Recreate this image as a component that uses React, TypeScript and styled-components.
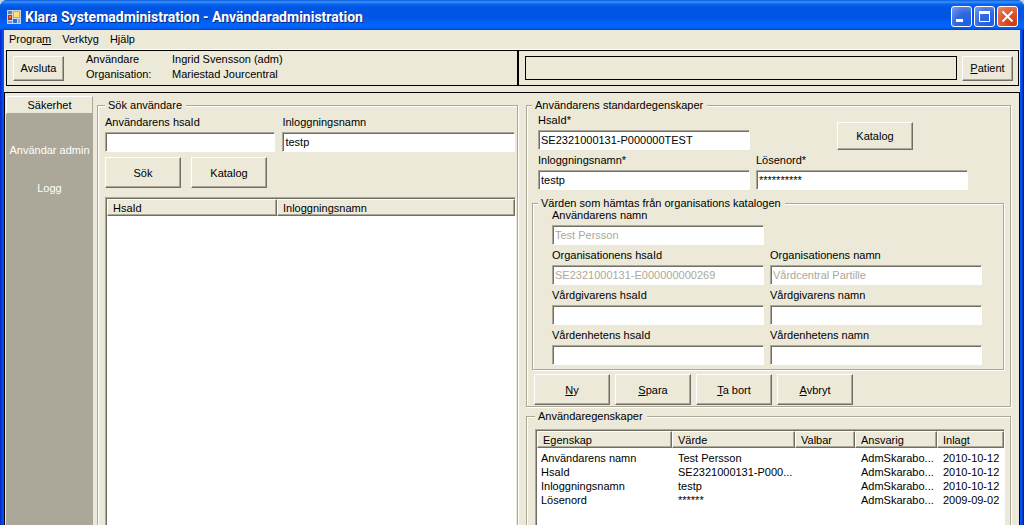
import React from "react";
import styled, { createGlobalStyle } from "styled-components";

const face = "#ece9d8";
const shadow = "#aca899";
const dark = "#716f64";

const Global = createGlobalStyle`
  *, *::before, *::after { box-sizing: border-box; }
  body {
    margin: 0;
    background: #c8d4ea;
    color: #000;
    font: 11px/14px "Liberation Sans", Arial, sans-serif;
  }
  button, input { font: inherit; color: inherit; }
`;

const Window = styled.div`
  display: flex;
  flex-direction: column;
  height: 100vh;
  overflow: hidden;
  border-radius: 7px 7px 0 0;
  background: linear-gradient(to right, #0a22c8 0, #0046e0 2px, #0a5af0 4px, #0a5af0 calc(100% - 4px), #0046e0 calc(100% - 2px), #0014a0 100%);
`;

const TitleBar = styled.header`
  display: flex;
  align-items: center;
  gap: 4px;
  flex: none;
  height: 30px;
  padding: 3px 6px 0 7px;
  background: linear-gradient(#0a5ade 0, #3c92fb 2px, #0a66ee 4px, #0054e3 8px, #0055e6 18px, #0066ff 25px, #0060f8 28px, #0043c4 30px);
`;

const Title = styled.h1`
  flex: 1;
  margin: 0;
  padding-top: 1px;
  color: #fff;
  font: bold 14px/20px Roboto, sans-serif;
  text-shadow: 1px 1px 0 #0a2a86;
  white-space: nowrap;
`;

const WindowButtons = styled.div`
  display: flex;
  gap: 2px;
`;

const WindowButton = styled.button<{ $close?: boolean }>`
  display: flex;
  width: 21px;
  height: 21px;
  padding: 0;
  border: 1px solid #fff;
  border-radius: 3px;
  background: ${(p) =>
    p.$close
      ? "radial-gradient(circle at 80% 90%, #d0380c, #e0552e 50%, #e88a6c)"
      : "radial-gradient(circle at 80% 90%, #1a5ee8, #3468dc 50%, #7b9cf0)"};
`;

const Body = styled.div`
  display: flex;
  flex-direction: column;
  flex: 1;
  min-height: 0;
  margin: 0 4px;
  background: ${face};
`;

const MenuBar = styled.nav`
  display: flex;
  gap: 11px;
  flex: none;
  height: 20px;
  padding: 1px 5px 3px;
  border-bottom: 1px solid #fff;
`;

const MenuItem = styled.button`
  padding: 0;
  border: 0;
  background: none;
  line-height: 14px;
`;

const InfoBar = styled.section`
  display: flex;
  flex: none;
  height: 36px;
  margin: 0 1px 6px 2px;
  border: 1px solid #000;
`;

const UserPane = styled.div`
  display: flex;
  align-items: center;
  gap: 22px;
  flex: 516 1 0;
  padding-left: 6px;
  border-right: 2px solid #000;
`;

const UserInfo = styled.dl`
  display: grid;
  grid-template-columns: 86px auto;
  margin: 0;
  padding-bottom: 3px;
  line-height: 15px;
  white-space: nowrap;
`;

const UserText = styled.dd`
  margin: 0;
`;

const PatientPane = styled.div`
  display: flex;
  align-items: center;
  gap: 5px;
  flex: 499 1 0;
  padding: 0 5px 0 6px;
`;

const PatientBox = styled.output`
  flex: 1;
  height: 24px;
  border: 1px solid #000;
`;

const Button = styled.button<{ $size?: "small" | "medium" }>`
  flex: none;
  width: ${(p) => (p.$size === "small" ? "51px" : "76px")};
  height: ${(p) => (p.$size === "small" ? "25px" : p.$size === "medium" ? "28px" : "31px")};
  padding: 0;
  border: 1px solid;
  border-color: #fff ${dark} ${dark} #fff;
  background: ${face};
  box-shadow: inset -1px -1px 0 ${shadow};
  white-space: nowrap;
`;

const Main = styled.main`
  display: flex;
  flex: 1;
  min-height: 0;
  border: 1px solid #000;
  border-bottom: 0;
`;

const Sidebar = styled.nav`
  display: flex;
  flex-direction: column;
  align-items: stretch;
  flex: none;
  width: 87px;
  margin: 3px 0 0 1px;
  background: ${shadow};
`;

const SidebarHeader = styled.button`
  height: 18px;
  margin-bottom: 17px;
  padding: 0;
  border: 1px solid;
  border-color: #fff ${shadow} ${shadow} #fff;
  background: ${face};
`;

const SidebarLink = styled.a`
  height: 38px;
  color: #fff;
  line-height: 38px;
  text-align: center;
  text-decoration: none;
  white-space: nowrap;
`;

const Columns = styled.div`
  display: flex;
  gap: 8px;
  flex: 1;
  min-width: 0;
  padding: 5px 8px 0 4px;
`;

const Column = styled.div<{ $grow: number }>`
  display: flex;
  flex-direction: column;
  gap: 2px;
  flex: ${(p) => p.$grow} 1 0;
  min-width: 0;
`;

const Group = styled.fieldset<{ $open?: boolean; $pad: string }>`
  display: flex;
  flex-direction: column;
  flex: ${(p) => (p.$open ? "1 1 auto" : "none")};
  min-width: 0;
  min-height: 0;
  margin: 0;
  padding: ${(p) => p.$pad};
  border: 1px solid ${shadow};
  border-bottom-width: ${(p) => (p.$open ? 0 : "1px")};
  box-shadow: inset 1px 1px 0 #fff, 1px 1px 0 #fff;
`;

const Legend = styled.legend`
  padding: 0 4px 0 3px;
  background: ${face};
  line-height: 14px;
  white-space: nowrap;
`;

const SearchFields = styled.div`
  display: grid;
  grid-template-columns: 170fr 232fr;
  gap: 7px;
  margin-bottom: 5px;
  padding-right: 1px;
`;

const FieldGrid = styled.div`
  display: grid;
  grid-template-columns: minmax(0, 212px) minmax(0, 212px);
  column-gap: 6px;
`;

const StandardFields = styled(FieldGrid)`
  margin-top: -2px;
  padding: 0 0 6px 6px;
`;

const CatalogFields = styled(FieldGrid)`
  margin-top: -5px;
  padding: 0 0 0 14px;
`;

const FieldBox = styled.div`
  display: flex;
  flex-direction: column;
  min-width: 0;
`;

const Label = styled.label`
  height: 20px;
  line-height: 20px;
  white-space: nowrap;
`;

const Input = styled.input`
  width: 100%;
  height: 20px;
  padding: 0 2px;
  border: 1px solid;
  border-color: ${shadow} #fff #fff ${shadow};
  border-radius: 0;
  outline: 0;
  background: #fff;
  box-shadow: inset 1px 1px 0 ${dark};
  &:disabled { color: ${shadow}; }
`;

const ButtonRow = styled.div<{ $gap: number }>`
  display: flex;
  gap: ${(p) => p.$gap}px;
`;

const SearchButtons = styled(ButtonRow)`
  margin-bottom: 9px;
`;

const EditButtons = styled(ButtonRow)`
  margin-top: 4px;
  padding-left: 2px;
`;

const KatalogCell = styled.div`
  display: flex;
  align-items: center;
  justify-content: center;
  padding: 12px 0 0 26px;
`;

const ListBox = styled.div`
  flex: 1;
  min-height: 0;
  overflow: hidden;
  border: 1px solid;
  border-color: ${shadow} #fff #fff ${shadow};
  border-bottom: 0;
  padding: 1px 0 0 1px;
  background: #fff;
  box-shadow: inset 1px 1px 0 ${dark};
`;

const Table = styled.table`
  width: 100%;
  table-layout: fixed;
  border-collapse: separate;
  border-spacing: 0;
`;

const HeadCell = styled.th<{ $width?: string }>`
  width: ${(p) => p.$width ?? "auto"};
  height: 17px;
  padding: 0 5px;
  border: 1px solid;
  border-color: #fff ${dark} ${dark} #fff;
  background: ${face};
  box-shadow: inset -1px -1px 0 ${shadow};
  font-weight: normal;
  line-height: 14px;
  text-align: left;
`;

const Rows = styled.tbody`
  &::before { content: ""; display: table-row; height: 3px; }
`;

const Cell = styled.td`
  height: 14px;
  padding: 0 0 0 6px;
  line-height: 14px;
  overflow: hidden;
  white-space: nowrap;
  &:first-child { padding-left: 4px; }
`;

interface FieldProps {
  id: string;
  label: string;
  value?: string;
  disabled?: boolean;
}

const Field = ({ id, label, value = "", disabled }: FieldProps) => (
  <FieldBox>
    <Label htmlFor={id}>{label}</Label>
    <Input id={id} type="text" defaultValue={value} disabled={disabled} />
  </FieldBox>
);

const AppIcon = () => (
  <svg width="14" height="14" viewBox="0 0 14 14" aria-hidden="true">
    <rect width="14" height="14" fill="#c9d6ea" />
    <rect x="1" y="1" width="4" height="3" fill="#5f7fb8" />
    <rect x="6" y="1" width="7" height="7" fill="#f0a818" />
    <rect x="7" y="2" width="5" height="5" fill="#ffe06a" />
    <rect x="1" y="5" width="4" height="5" fill="#c8281c" />
    <rect x="2" y="6" width="2" height="2" fill="#f27c62" />
    <rect x="1" y="11" width="4" height="2" fill="#7f95bd" />
    <rect x="6" y="9" width="4" height="4" fill="#2f6fd0" />
    <rect x="11" y="9" width="2" height="4" fill="#89a8dc" />
  </svg>
);

const properties = [
  ["Användarens namn", "Test Persson", "", "AdmSkarabo...", "2010-10-12"],
  ["HsaId", "SE2321000131-P000...", "", "AdmSkarabo...", "2010-10-12"],
  ["Inloggningsnamn", "testp", "", "AdmSkarabo...", "2010-10-12"],
  ["Lösenord", "******", "", "AdmSkarabo...", "2009-09-02"],
];

export default function App() {
  return (
    <>
      <Global />
      <Window>
        <TitleBar>
          <AppIcon />
          <Title>Klara Systemadministration - Användaradministration</Title>
          <WindowButtons>
            <WindowButton aria-label="Minimera">
              <svg width="19" height="19"><rect x="4" y="12" width="7" height="3" fill="#fff" /></svg>
            </WindowButton>
            <WindowButton aria-label="Maximera">
              <svg width="19" height="19">
                <path d="M4.5 5V14.5H14.5V5" fill="none" stroke="#fff" />
                <rect x="4" y="4" width="11" height="3" fill="#fff" />
              </svg>
            </WindowButton>
            <WindowButton $close aria-label="Stäng">
              <svg width="19" height="19"><path d="M4.5 4.5L14.5 14.5M14.5 4.5L4.5 14.5" stroke="#fff" strokeWidth="2" /></svg>
            </WindowButton>
          </WindowButtons>
        </TitleBar>
        <Body>
          <MenuBar>
            <MenuItem>Progra<u>m</u></MenuItem>
            <MenuItem>Verktyg</MenuItem>
            <MenuItem>Hjälp</MenuItem>
          </MenuBar>
          <InfoBar>
            <UserPane>
              <Button $size="small">Avsluta</Button>
              <UserInfo>
                <dt>Användare</dt>
                <UserText>Ingrid Svensson (adm)</UserText>
                <dt>Organisation:</dt>
                <UserText>Mariestad Jourcentral</UserText>
              </UserInfo>
            </UserPane>
            <PatientPane>
              <PatientBox />
              <Button $size="small"><u>P</u>atient</Button>
            </PatientPane>
          </InfoBar>
          <Main>
            <Sidebar>
              <SidebarHeader>Säkerhet</SidebarHeader>
              <SidebarLink href="#anvandare">Användar admin</SidebarLink>
              <SidebarLink href="#logg">Logg</SidebarLink>
            </Sidebar>
            <Columns>
              <Column $grow={421}>
                <Group $open $pad="0 1px 0 7px">
                  <Legend>Sök användare</Legend>
                  <SearchFields>
                    <Field id="sok-hsaid" label="Användarens hsaId" />
                    <Field id="sok-namn" label="Inloggningsnamn" value="testp" />
                  </SearchFields>
                  <SearchButtons $gap={10}>
                    <Button>Sök</Button>
                    <Button>Katalog</Button>
                  </SearchButtons>
                  <ListBox>
                    <Table>
                      <thead>
                        <tr>
                          <HeadCell $width="170px">HsaId</HeadCell>
                          <HeadCell>Inloggningsnamn</HeadCell>
                        </tr>
                      </thead>
                    </Table>
                  </ListBox>
                </Group>
              </Column>
              <Column $grow={485}>
                <Group $pad="0 6px 1px 5px">
                  <Legend>Användarens standardegenskaper</Legend>
                  <StandardFields>
                    <Field id="hsaid" label="HsaId*" value="SE2321000131-P000000TEST" />
                    <KatalogCell><Button $size="medium">Katalog</Button></KatalogCell>
                    <Field id="inloggningsnamn" label="Inloggningsnamn*" value="testp" />
                    <Field id="losenord" label="Lösenord*" value="**********" />
                  </StandardFields>
                  <Group $pad="0 20px 4px 5px">
                    <Legend>Värden som hämtas från organisations katalogen</Legend>
                    <CatalogFields>
                      <Field id="anv-namn" label="Användarens namn" value="Test Persson" disabled />
                      <span />
                      <Field id="org-hsaid" label="Organisationens hsaId" value="SE2321000131-E000000000269" disabled />
                      <Field id="org-namn" label="Organisationens namn" value="Vårdcentral Partille" disabled />
                      <Field id="vg-hsaid" label="Vårdgivarens hsaId" />
                      <Field id="vg-namn" label="Vårdgivarens namn" />
                      <Field id="ve-hsaid" label="Vårdenhetens hsaId" />
                      <Field id="ve-namn" label="Vårdenhetens namn" />
                    </CatalogFields>
                  </Group>
                  <EditButtons $gap={5}>
                    <Button><u>N</u>y</Button>
                    <Button><u>S</u>para</Button>
                    <Button><u>T</u>a bort</Button>
                    <Button><u>A</u>vbryt</Button>
                  </EditButtons>
                </Group>
                <Group $open $pad="6px 5px 0 8px">
                  <Legend>Användaregenskaper</Legend>
                  <ListBox>
                    <Table>
                      <thead>
                        <tr>
                          <HeadCell $width="135px">Egenskap</HeadCell>
                          <HeadCell $width="123px">Värde</HeadCell>
                          <HeadCell $width="60px">Valbar</HeadCell>
                          <HeadCell $width="82px">Ansvarig</HeadCell>
                          <HeadCell>Inlagt</HeadCell>
                        </tr>
                      </thead>
                      <Rows>
                        {properties.map((row) => (
                          <tr key={row[0]}>
                            {row.map((text, i) => <Cell key={i}>{text}</Cell>)}
                          </tr>
                        ))}
                      </Rows>
                    </Table>
                  </ListBox>
                </Group>
              </Column>
            </Columns>
          </Main>
        </Body>
      </Window>
    </>
  );
}
